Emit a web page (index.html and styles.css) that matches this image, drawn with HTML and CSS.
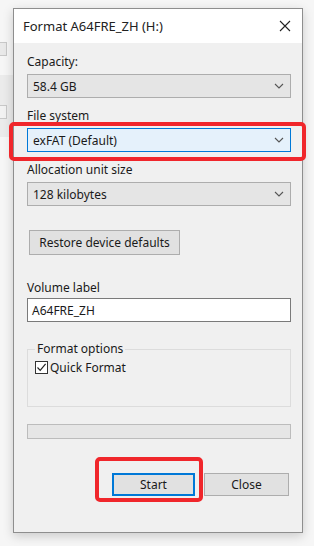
FILE: index.html
```html
<!DOCTYPE html>
<html>
<head>
<meta charset="utf-8">
<link rel="stylesheet" href="styles.css">
</head>
<body>
<div class="desk">
  <div class="behind">
    <div class="bh-box bh-1"></div>
    <div class="bh-band">
      <div class="bh-box bh-2"></div>
    </div>
  </div>
  <div class="window">
    <div class="titlebar">
      <span class="title">Format A64FRE_ZH (H:)</span>
      <svg class="close" width="12" height="12" viewBox="0 0 12 12"><path d="M1 1L11 11M11 1L1 11" stroke="#222" stroke-width="1.1" fill="none"/></svg>
    </div>
    <div class="content">
      <div class="label l-cap">Capacity:</div>
      <div class="select">
        <span>58.4 GB</span>
        <svg class="chev" width="10" height="6" viewBox="0 0 10 6"><path d="M1 1L5 5L9 1" stroke="#555" stroke-width="1.1" fill="none"/></svg>
      </div>
      <div class="label l-fs">File system</div>
      <div class="select focused highlight">
        <span>exFAT (Default)</span>
        <svg class="chev" width="10" height="6" viewBox="0 0 10 6"><path d="M1 1L5 5L9 1" stroke="#555" stroke-width="1.1" fill="none"/></svg>
      </div>
      <div class="label l-au">Allocation unit size</div>
      <div class="select">
        <span>128 kilobytes</span>
        <svg class="chev" width="10" height="6" viewBox="0 0 10 6"><path d="M1 1L5 5L9 1" stroke="#555" stroke-width="1.1" fill="none"/></svg>
      </div>
      <button class="btn restore">Restore device defaults</button>
      <div class="label l-vol">Volume label</div>
      <div class="input">A64FRE_ZH</div>
      <fieldset class="group">
        <legend>Format options</legend>
        <div class="check-row">
          <span class="checkbox"><svg width="11" height="11" viewBox="0 0 11 11"><path d="M1.5 5.5L4.2 8.3L9.6 1.8" stroke="#222" stroke-width="1.2" fill="none"/></svg></span>
          <span>Quick Format</span>
        </div>
      </fieldset>
      <div class="progress"></div>
      <div class="actions">
        <button class="btn start highlight-btn">Start</button>
        <button class="btn close-btn">Close</button>
      </div>
    </div>
  </div>
</div>
</body>
</html>
```
FILE: styles.css
```css
html, body {
  margin: 0;
  padding: 0;
}
body {
  background: #f6f6f6;
  font-family: "Noto Sans", "Open Sans", sans-serif;
  font-size: 12px;
  color: #1a1a1a;
  width: 314px;
  height: 546px;
  overflow: hidden;
}
.desk {
  display: flex;
  padding-top: 8px;
}
.behind {
  width: 13px;
  flex: none;
  display: flex;
  flex-direction: column;
}
.bh-box {
  width: 6px;
  height: 12px;
  border: 1px solid #c8c8c8;
  border-left: none;
  background: #e9e9e9;
}
.bh-1 {
  margin-top: 34px;
}
.bh-band {
  margin-top: 19px;
  height: 62px;
  background: #ebebeb;
  padding-top: 30px;
  box-sizing: border-box;
}
.bh-2 {
  background: #f2f2f2;
}
.window {
  width: 290px;
  height: 525px;
  box-sizing: border-box;
  border: 1px solid #8e8e8e;
  background: #f0f0f0;
  box-shadow: 0 3px 10px rgba(0,0,0,0.18);
  display: flex;
  flex-direction: column;
}
.titlebar {
  height: 34px;
  background: #fff;
  display: flex;
  align-items: center;
  justify-content: space-between;
  padding: 0 11px 0 9px;
  flex: none;
}
.title {
  font-size: 13px;
  color: #222;
}
.content {
  padding: 0 11px 0 13px;
  display: flex;
  flex-direction: column;
}
.label {
  line-height: 16px;
  height: 16px;
}
.l-cap { margin-top: 11px; }
.l-fs { margin-top: 10px; }
.l-au { margin-top: 10px; }
.l-vol { margin-top: 25px; }
.select {
  margin-top: 4px;
  height: 24px;
  box-sizing: border-box;
  border: 1px solid #adadad;
  background: #e5e5e5;
  display: flex;
  align-items: center;
  justify-content: space-between;
  padding: 0 6px 0 5px;
  position: relative;
}
.select.focused {
  background: #e5f1fb;
  border-color: #0078d7;
}
.highlight::after {
  content: "";
  position: absolute;
  left: -19px;
  right: -16px;
  top: -7px;
  bottom: -10px;
  border: 4px solid #f0262b;
  border-radius: 5px;
}
.chev {
  display: block;
}
.btn {
  font-family: inherit;
  font-size: 12px;
  color: #1a1a1a;
  background: #e1e1e1;
  border: 1px solid #adadad;
  height: 25px;
  padding: 0;
  margin: 0;
  box-sizing: border-box;
}
.restore {
  margin-top: 24px;
  margin-left: 2px;
  width: 151px;
  align-self: flex-start;
}
.input {
  margin-top: 2px;
  height: 24px;
  box-sizing: border-box;
  border: 1px solid #7a7a7a;
  background: #fff;
  display: flex;
  align-items: center;
  padding-left: 4px;
}
.group {
  margin: 19px 0 0 0;
  padding: 0 0 0 7px;
  border: 1px solid #dcdcdc;
  height: 66px;
  box-sizing: border-box;
}
.group legend {
  padding: 0 2px;
  margin-left: 0;
  line-height: 16px;
}
.check-row {
  display: flex;
  align-items: center;
  gap: 2px;
  margin-top: 2px;
}
.checkbox {
  width: 13px;
  height: 13px;
  box-sizing: border-box;
  border: 1px solid #333;
  background: #fff;
  display: flex;
  align-items: center;
  justify-content: center;
}
.checkbox svg {
  display: block;
}
.progress {
  margin-top: 17px;
  height: 15px;
  box-sizing: border-box;
  border: 1px solid #bcbcbc;
  background: #e6e6e6;
}
.actions {
  margin-top: 34px;
  display: flex;
  justify-content: flex-end;
  gap: 9px;
  padding-right: 2px;
}
.start {
  width: 83px;
  height: 23px;
  border: 2px solid #0078d7;
  position: relative;
}
.close-btn {
  width: 85px;
  height: 23px;
}
.highlight-btn::after {
  content: "";
  position: absolute;
  left: -19px;
  right: -10px;
  top: -18px;
  bottom: -8px;
  border: 4px solid #f0262b;
  border-radius: 5px;
}
```
